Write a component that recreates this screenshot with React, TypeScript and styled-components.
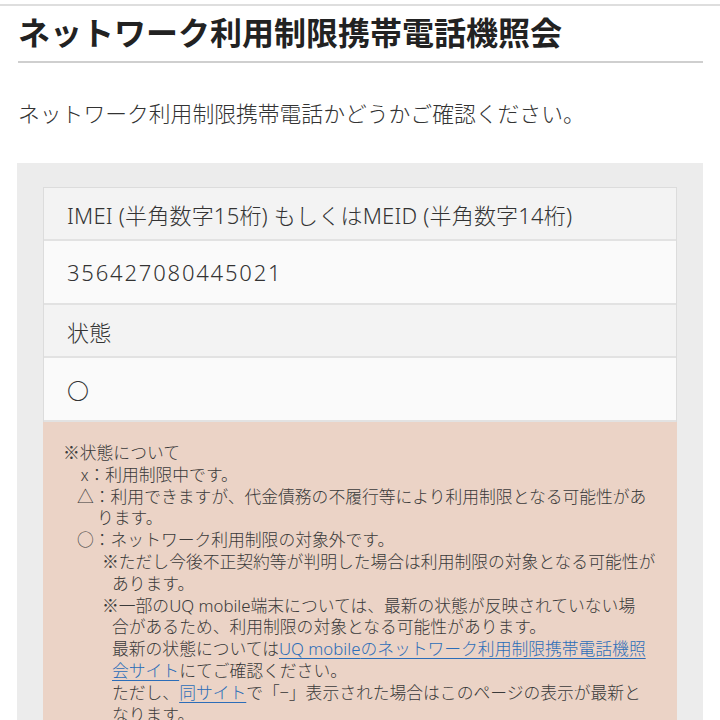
import styled, { createGlobalStyle } from "styled-components";

const GlobalStyle = createGlobalStyle`
  html, body {
    margin: 0;
    padding: 0;
    background: #fff;
  }
  body {
    font-family: "Noto Sans CJK JP", "Noto Sans", sans-serif;
    color: #333;
  }
`;

const TopRule = styled.div`
  height: 4px;
  border-bottom: 2px solid #dedede;
`;

const Page = styled.main`
  margin: 0 17px 0 18px;
`;

const Title = styled.h1`
  margin: 0;
  padding: 4px 0 9px;
  font-size: 32px;
  line-height: 42px;
  font-weight: bold;
  color: #222;
  border-bottom: 2px solid #cfcfcf;
`;

const Lead = styled.p`
  margin: 0;
  padding: 34px 0 0;
  font-size: 21.8px;
  line-height: 32px;
  font-weight: 300;
  color: #333;
`;

const Panel = styled.section`
  margin-top: 34px;
  margin-left: -1px;
  background: #ececec;
  padding: 24px 26px 0;
`;

const Table = styled.div`
  border: 1px solid #dcdcdc;
  border-bottom: none;
`;

const Row = styled.div<{ $head?: boolean }>`
  display: flex;
  align-items: center;
  padding: 0 23px;
  height: ${({ $head }) => ($head ? "51px" : "62px")};
  background: ${({ $head }) => ($head ? "#f3f3f3" : "#fafafa")};
  border-bottom: 2px solid #e2e2e2;
  font-family: "Noto Sans", "Noto Sans CJK JP", sans-serif;
  font-size: 22px;
  font-weight: 300;
  letter-spacing: ${({ $head }) => ($head ? "0.2px" : "1.8px")};
  color: #333;
`;

const Note = styled.div`
  background: #ebd3c6;
  padding: 20px 8px 10px 20px;
  font-size: 16.8px;
  line-height: 21.8px;
  font-weight: 300;
  color: #3a3a3a;
`;

const NoteLine = styled.div<{ $level: number }>`
  padding-left: ${({ $level }) => [0, 34, 49, 49][$level]}px;
  text-indent: ${({ $level }) => [0, -20, -10, 0][$level]}px;
`;

const Latin = styled.span`
  font-family: "Noto Sans", "Noto Sans CJK JP", sans-serif;
`;

const Link = styled.a`
  color: #2c6db8;
  text-decoration: underline;
  text-underline-offset: 3px;
`;

export default function App() {
  return (
    <>
      <GlobalStyle />
      <TopRule />
      <Page>
        <Title>ネットワーク利用制限携帯電話機照会</Title>
        <Lead>ネットワーク利用制限携帯電話かどうかご確認ください。</Lead>
        <Panel>
          <Table>
            <Row $head>IMEI (半角数字15桁) もしくはMEID (半角数字14桁)</Row>
            <Row>356427080445021</Row>
            <Row $head>状態</Row>
            <Row>〇</Row>
          </Table>
          <Note>
            <NoteLine $level={0}>※状態について</NoteLine>
            <NoteLine $level={1}>&nbsp;x：利用制限中です。</NoteLine>
            <NoteLine $level={1}>
              △：利用できますが、代金債務の不履行等により利用制限となる可能性があ
              <br />
              ります。
            </NoteLine>
            <NoteLine $level={1}>○：ネットワーク利用制限の対象外です。</NoteLine>
            <NoteLine $level={2}>
              ※ただし今後不正契約等が判明した場合は利用制限の対象となる可能性が
              <br />
              あります。
            </NoteLine>
            <NoteLine $level={2}>
              ※一部の<Latin>UQ mobile</Latin>端末については、最新の状態が反映されていない場
              <br />
              合があるため、利用制限の対象となる可能性があります。
            </NoteLine>
            <NoteLine $level={3}>
              最新の状態については
              <Link href="#">
                <Latin>UQ mobile</Latin>のネットワーク利用制限携帯電話機照
                <br />
                会サイト
              </Link>
              にてご確認ください。
            </NoteLine>
            <NoteLine $level={3}>
              ただし、<Link href="#">同サイト</Link>で「−」表示された場合はこのページの表示が最新と
              <br />
              なります。
            </NoteLine>
          </Note>
        </Panel>
      </Page>
    </>
  );
}
